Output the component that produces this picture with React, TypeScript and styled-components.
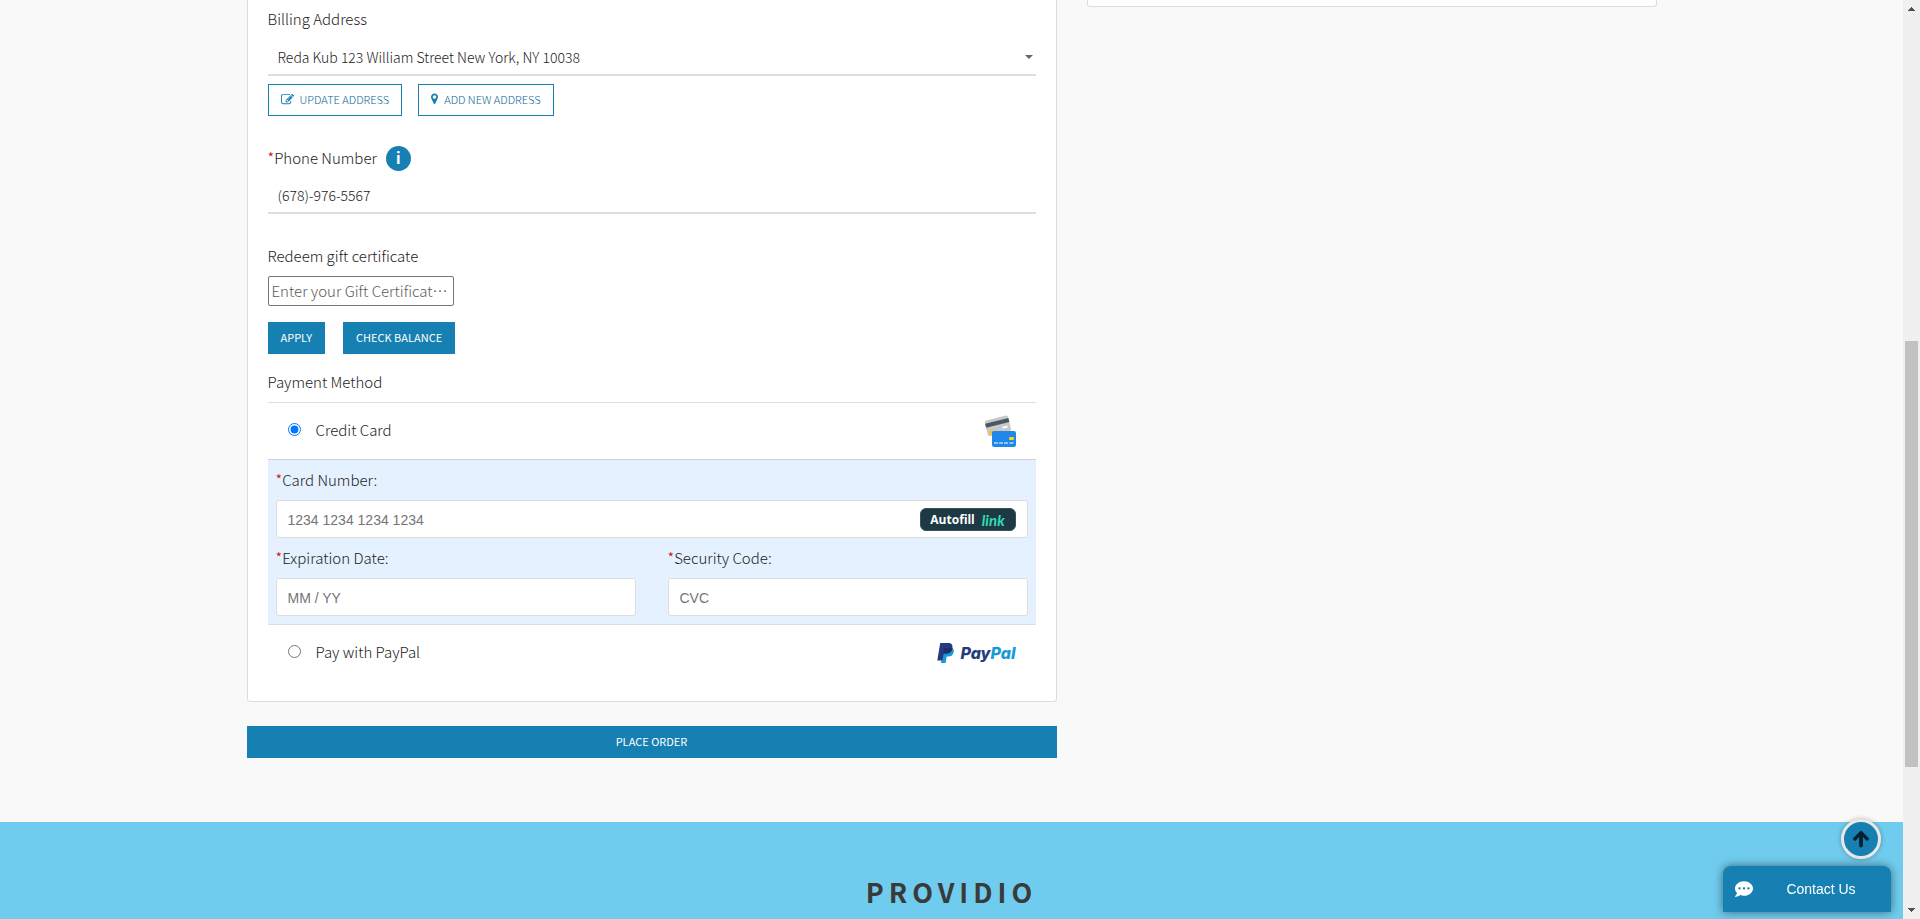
import React, { useState } from "react";
import styled, { createGlobalStyle, css } from "styled-components";
import { FaArrowUp, FaCommentDots } from "react-icons/fa";

const blue = "#1680b2";
const line = "#dddddd";
const ink = "#1c1c1c";
const hint = "#757575";
const sans = '"Source Sans Pro", "Noto Sans CJK KR", "Open Sans", sans-serif';
const arial = 'Arial, "Liberation Sans", sans-serif';

const GlobalStyle = createGlobalStyle`
  * { box-sizing: border-box; }
  body { margin: 0; background: #f9f9f9; color: ${ink}; font-family: ${sans}; font-size: 15px; font-weight: 300; line-height: 24px; }
  button, input, select { font-family: inherit; font-weight: inherit; margin: 0; }
`;

const Shell = styled.div`
  display: grid;
  grid-template-columns: minmax(0, 1fr) 17px;
  height: 100vh;
  overflow: hidden;
`;

const Page = styled.div`
  display: flex;
  flex-direction: column;
  overflow: hidden;
`;

const Columns = styled.main`
  display: grid;
  grid-template-columns: minmax(0, 27fr) minmax(0, 19fr);
  align-items: start;
  gap: 30px;
  width: 100%;
  max-width: 1440px;
  margin: 0 auto;
  padding: 0 15px 64px;
`;

const panel = css`
  background: #fff;
  border: 1px solid ${line};
  border-top: 0;
  border-radius: 0 0 3px 3px;
`;

const Summary = styled.aside`
  ${panel}
  height: 7px;
`;

const Card = styled.section`
  ${panel}
  padding: 7px 20px 20px;
  margin-bottom: 24px;
`;

const Label = styled.label`
  display: block;
`;

const Required = styled.span`
  color: #c00;
`;

const LabelRow = styled.div`
  display: flex;
  align-items: center;
  gap: 9px;
  height: 26px;
  margin-top: 29px;
`;

const InfoButton = styled.button`
  display: flex;
  align-items: center;
  justify-content: center;
  width: 25px;
  height: 25px;
  padding: 0;
  border: 0;
  border-radius: 50%;
  background: ${blue};
  color: #fff;
  font-size: 15px;
  font-weight: 700;
  line-height: 24px;
`;

const underlined = css`
  display: block;
  width: 100%;
  height: 34px;
  padding: 0 10px 2px;
  border: 0;
  border-bottom: 2px solid ${line};
  border-radius: 0;
  background: transparent;
  color: ${ink};
  font-size: 14px;
  outline: 0;
`;

const SelectWrap = styled.div`
  position: relative;
  margin-top: 11px;
`;

const Select = styled.select`
  ${underlined}
  appearance: none;
`;

const Caret = styled.svg`
  position: absolute;
  right: 3px;
  top: 13px;
  pointer-events: none;
`;

const PhoneInput = styled.input`
  ${underlined}
  margin-top: 9px;
`;

const ButtonRow = styled.div<{ $gap: number; $top: number }>`
  display: flex;
  gap: ${(p) => p.$gap}px;
  margin-top: ${(p) => p.$top}px;
`;

const OutlineButton = styled.button`
  display: flex;
  align-items: center;
  gap: 6px;
  height: 32px;
  padding: 0 12px 2px;
  border: 1px solid ${blue};
  background: #fff;
  color: #0a6695;
  font-size: 11px;
  line-height: 16px;
`;

const SolidButton = styled.button<{ $block?: boolean }>`
  height: 32px;
  padding: 0 13px 2px;
  width: ${(p) => (p.$block ? "100%" : "auto")};
  border: 0;
  background: ${blue};
  color: #fff;
  font-size: 11px;
  font-weight: 400;
  line-height: 16px;
`;

const GiftBlock = styled.div`
  margin-top: 30px;
`;

const GiftInput = styled.input`
  display: block;
  width: 186px;
  height: 30px;
  margin-top: 8px;
  padding: 0 3px 2px;
  border: 1px solid #767676;
  border-radius: 2px;
  font-size: 15px;
  text-overflow: ellipsis;
  &::placeholder { color: #5c5c5c; }
`;

const SectionTitle = styled.div`
  margin-top: 16px;
  padding-bottom: 8px;
  border-bottom: 1px solid ${line};
`;

const Option = styled.div`
  display: flex;
  align-items: center;
  justify-content: space-between;
  height: 56px;
  padding: 0 20px;
`;

const OptionLabel = styled.label`
  display: flex;
  align-items: center;
  gap: 15px;
  padding-bottom: 2px;
`;

const Radio = styled.input`
  width: 13px;
  height: 13px;
  && { margin-bottom: 2px; }
`;

const CardForm = styled.div`
  padding: 8px;
  border-top: 1px solid #ccd3da;
  border-bottom: 1px solid ${line};
  background: #e5f1ff;
`;

const Fields = styled.div`
  display: grid;
  grid-template-columns: 1fr 1fr;
  gap: 32px;
  margin-top: 8px;
`;

const FieldBox = styled.div`
  display: flex;
  align-items: center;
  height: 38px;
  margin-top: 8px;
  padding: 0 11px;
  border: 1px solid ${line};
  border-radius: 3px;
  background: #fff;
`;

const FieldInput = styled.input`
  flex: 1;
  min-width: 0;
  padding: 2px 0 0;
  border: 0;
  outline: 0;
  background: transparent;
  font-family: ${arial};
  font-size: 14px;
  &::placeholder { color: ${hint}; }
`;

const Autofill = styled.button`
  display: flex;
  align-items: center;
  justify-content: center;
  gap: 7px;
  width: 96px;
  height: 23px;
  padding: 2px 0 0;
  border: 1px solid #3b515c;
  border-radius: 6px;
  background: #1d3944;
  color: #fff;
  font-family: "Open Sans", sans-serif;
  font-size: 12px;
  font-weight: 700;
  line-height: 16px;
`;

const LinkWord = styled.span`
  color: #33ddb3;
  font-family: Lato, sans-serif;
  font-size: 15px;
  font-style: italic;
`;

const PayPal = styled.span`
  display: flex;
  align-items: center;
  gap: 6px;
  color: #253b80;
  font-family: Inter, sans-serif;
  font-size: 16px;
  font-style: italic;
  font-weight: 800;
`;

const Pal = styled.span`
  color: #179bd7;
`;

const Footer = styled.footer`
  flex: 1 0 auto;
  padding-top: 51px;
  background: #70ccee;
  text-align: center;
`;

const Brand = styled.div`
  color: #3a3a3a;
  font-size: 27px;
  font-weight: 700;
  line-height: 38px;
  letter-spacing: 5px;
`;

const TopButton = styled.button`
  position: fixed;
  right: 39px;
  bottom: 60px;
  display: flex;
  align-items: center;
  justify-content: center;
  width: 40px;
  height: 40px;
  padding: 0;
  border: 3px solid #e8e8e8;
  border-radius: 50%;
  background: ${blue};
  color: #04202e;
  box-shadow: 0 0 5px rgba(0, 0, 0, 0.3);
  path { stroke: currentColor; stroke-width: 24px; }
`;

const Contact = styled.button`
  position: fixed;
  right: 29px;
  bottom: 7px;
  display: grid;
  grid-template-columns: 18px 1fr;
  align-items: center;
  width: 168px;
  height: 46px;
  padding: 0 12px;
  border: 0;
  border-radius: 8px 8px 0 0;
  background: ${blue};
  color: #fff;
  box-shadow: 0 0 10px rgba(0, 0, 0, 0.5);
  && { font-family: ${arial}; font-size: 14px; }
`;

const ContactText = styled.span`
  padding-left: 10px;
`;

const Scrollbar = styled.div`
  display: flex;
  flex-direction: column;
  align-items: center;
  justify-content: space-between;
  padding: 7px 0;
  background: #f0f0f0;
`;

const Track = styled.div`
  display: flex;
  flex: 1;
  flex-direction: column;
  width: 13px;
  margin: 6px 0;
  &::before { content: ""; flex: 324 0 0; }
  &::after { content: ""; flex: 135 0 0; }
`;

const Thumb = styled.div`
  flex: 427 0 0;
  background: #c1c1c1;
`;

const EditIcon = () => (
  <svg width="13" height="13" viewBox="0 0 1792 1792" fill={blue} aria-hidden="true">
    <path d="M888 1184l116-116-152-152-116 116v56h96v96h56zm440-720q-16-16-33 1l-350 350q-17 17-1 33t33-1l350-350q17-17 1-33zm80 594v190q0 119-84.5 203.5t-203.5 84.5h-832q-119 0-203.5-84.5t-84.5-203.5v-832q0-119 84.5-203.5t203.5-84.5h832q63 0 117 25 15 7 18 23 3 17-9 29l-49 49q-14 14-32 8-23-6-45-6h-832q-66 0-113 47t-47 113v832q0 66 47 113t113 47h832q66 0 113-47t47-113v-126q0-13 9-22l64-64q15-15 35-7t20 29zm-96-738l288 288-672 672h-288v-288zm444 132l-92 92-288-288 92-92q28-28 68-28t68 28l152 152q28 28 28 68t-28 68z" />
  </svg>
);

const PinIcon = () => (
  <svg width="7" height="12" viewBox="384 128 1024 1600" fill={blue} aria-hidden="true">
    <path d="M1152 640q0-106-75-181t-181-75-181 75-75 181 75 181 181 75 181-75 75-181zm256 0q0 109-33 179l-364 774q-16 33-47.5 52t-67.5 19-67.5-19-46.5-52l-365-774q-33-70-33-179 0-212 150-362t362-150 362 150 150 362z" />
  </svg>
);

const CardsIcon = () => (
  <svg width="32" height="32" viewBox="0 0 32 32" aria-hidden="true">
    <g transform="rotate(-14 13 11)">
      <rect x="2" y="3" width="24" height="16" rx="2" fill="#c8c8c8" />
      <rect x="2" y="6" width="24" height="4" fill="#455a64" />
      <rect x="18" y="13" width="5" height="2" fill="#fff" />
      <rect x="4" y="14" width="5" height="4" rx="1" fill="#fbc21b" />
    </g>
    <rect x="8" y="16" width="24" height="16" rx="2" fill="#2088ea" />
    <rect x="25" y="22" width="5" height="3" rx="1" fill="#ffcf1e" />
    <path d="M10 28h4M15 28h4M20 28h4M25.500 28h4" stroke="#b5d8fb" strokeWidth="1.500" />
  </svg>
);

const PayPalMark = () => (
  <svg width="17" height="20" viewBox="0 0 17 20" aria-hidden="true">
    <path d="M6 5h9.500c1.500 1 1.500 3 1 4.500-.8 3-2.600 4-5 4H9.700L8.600 20H4z" fill="#179bd7" />
    <path d="M3.200 0H11c3.400 0 5 1.800 4.400 5.200C14.700 8.800 12.500 10.500 9 10.500H6.700L5.300 17.500H.3z" fill="#253b80" />
    <path d="M7 5.500c.1-.4.500-.6.900-.6h7.500c-.5 3.900-2.900 5.600-6.400 5.600H6.200z" fill="#222d65" />
  </svg>
);

const Arrow = ({ up }: { up?: boolean }) => (
  <svg width="7" height="4" viewBox="0 0 7 4" fill="#505050" shapeRendering="crispEdges" aria-hidden="true">
    <path d={up ? "M0 4L3.500 0L7 4z" : "M0 0L3.500 4L7 0z"} />
  </svg>
);

export default function App() {
  const [method, setMethod] = useState("card");
  const pick = (e: React.ChangeEvent<HTMLInputElement>) => setMethod(e.target.value);

  return (
    <>
      <GlobalStyle />
      <Shell>
        <Page>
          <Columns>
            <div>
              <Card>
                <Label htmlFor="billing">Billing Address</Label>
                <SelectWrap>
                  <Select id="billing">
                    <option>Reda Kub 123 William Street New York, NY 10038</option>
                  </Select>
                  <Caret width="8" height="4" viewBox="0 0 8 4" fill="#666">
                    <path d="M0 0h8L4 4z" />
                  </Caret>
                </SelectWrap>
                <ButtonRow $gap={16} $top={8}>
                  <OutlineButton type="button"><EditIcon />UPDATE ADDRESS</OutlineButton>
                  <OutlineButton type="button"><PinIcon />ADD NEW ADDRESS</OutlineButton>
                </ButtonRow>

                <LabelRow>
                  <Label htmlFor="phone"><Required>*</Required>Phone Number</Label>
                  <InfoButton type="button">i</InfoButton>
                </LabelRow>
                <PhoneInput id="phone" type="tel" defaultValue="(678)-976-5567" />

                <GiftBlock>
                  <Label htmlFor="gift">Redeem gift certificate</Label>
                  <GiftInput id="gift" placeholder="Enter your Gift Certificate Code" />
                </GiftBlock>
                <ButtonRow $gap={18} $top={16}>
                  <SolidButton type="button">APPLY</SolidButton>
                  <SolidButton type="button">CHECK BALANCE</SolidButton>
                </ButtonRow>

                <SectionTitle>Payment Method</SectionTitle>
                <Option>
                  <OptionLabel>
                    <Radio type="radio" name="method" value="card" checked={method === "card"} onChange={pick} />
                    Credit Card
                  </OptionLabel>
                  <CardsIcon />
                </Option>
                <CardForm>
                  <Label htmlFor="number"><Required>*</Required>Card Number:</Label>
                  <FieldBox>
                    <FieldInput id="number" placeholder="1234 1234 1234 1234" />
                    <Autofill type="button">Autofill<LinkWord>link</LinkWord></Autofill>
                  </FieldBox>
                  <Fields>
                    <div>
                      <Label htmlFor="expiry"><Required>*</Required>Expiration Date:</Label>
                      <FieldBox><FieldInput id="expiry" placeholder="MM / YY" /></FieldBox>
                    </div>
                    <div>
                      <Label htmlFor="cvc"><Required>*</Required>Security Code:</Label>
                      <FieldBox><FieldInput id="cvc" placeholder="CVC" /></FieldBox>
                    </div>
                  </Fields>
                </CardForm>
                <Option>
                  <OptionLabel>
                    <Radio type="radio" name="method" value="paypal" checked={method === "paypal"} onChange={pick} />
                    Pay with PayPal
                  </OptionLabel>
                  <PayPal><PayPalMark /><span>Pay<Pal>Pal</Pal></span></PayPal>
                </Option>
              </Card>
              <SolidButton type="submit" $block>PLACE ORDER</SolidButton>
            </div>
            <Summary />
          </Columns>
          <Footer>
            <Brand>PROVIDIO</Brand>
          </Footer>
        </Page>
        <Scrollbar>
          <Arrow up />
          <Track><Thumb /></Track>
          <Arrow />
        </Scrollbar>
      </Shell>
      <TopButton type="button" aria-label="Back to top"><FaArrowUp size={18} /></TopButton>
      <Contact type="button"><FaCommentDots size={18} /><ContactText>Contact Us</ContactText></Contact>
    </>
  );
}
